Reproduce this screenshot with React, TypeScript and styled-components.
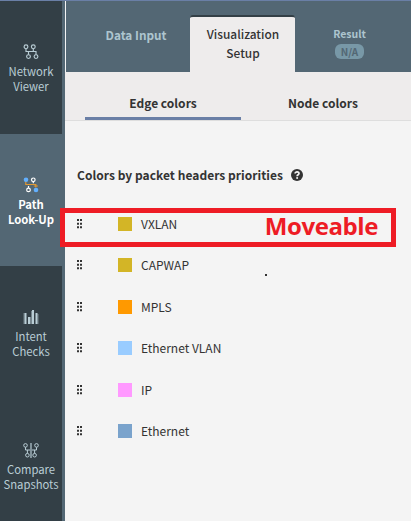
import React from "react";
import styled, { createGlobalStyle } from "styled-components";

const Global = createGlobalStyle`
  * { box-sizing: border-box; }
  body { margin: 0; overflow: hidden; font-family: "Noto Sans CJK SC", "Noto Sans", sans-serif; color: #333; }
`;

const Shell = styled.div`
  position: relative;
  display: flex;
  width: 411px;
  height: 521px;
  border-top: 1px solid #6a7fa6;
  background: #f4f4f4;
  overflow: hidden;
`;

const Sidebar = styled.nav`
  flex: 0 0 65px;
  height: 520px;
  padding-right: 3px;
  background: #536774;
`;

const NavItem = styled.a<{ $active?: boolean }>`
  display: flex;
  flex-direction: column;
  align-items: center;
  height: 132.6px;
  padding-top: 43px;
  background: ${(p) => (p.$active ? "#536774" : "#333f46")};
  color: ${(p) => (p.$active ? "#fff" : "#b9cdd5")};
  font-weight: ${(p) => (p.$active ? 700 : 400)};
  font-size: 11.3px;
  letter-spacing: ${(p) => (p.$active ? "-0.05px" : "-0.03px")};
  line-height: 15px;
  text-align: center;
  white-space: pre;
  svg { display: block; flex: none; margin-bottom: 4px; }
`;

const Main = styled.main`
  flex: 1;
  min-width: 0;
`;

const Tabs = styled.header`
  display: grid;
  grid-template-columns: 124px 105px 1fr;
  height: 71px;
  margin-left: 1px;
  background: #536774;
`;

const Tab = styled.div`
  display: flex;
  flex-direction: column;
  align-items: center;
  padding: 24px 0 0 16px;
  color: #adc5cf;
  font-size: 11.8px;
  font-weight: 700;
  line-height: 20px;
`;

const ActiveTab = styled(Tab)`
  margin-top: 14px;
  padding: 7px 0 0 1px;
  border-top: 2px solid #333f46;
  border-radius: 3px 3px 0 0;
  background: #eeecec;
  color: #333;
  font-size: 11.9px;
  font-weight: 500;
  line-height: 19px;
`;

const ResultTab = styled(Tab)`
  padding: 24px 7px 0 0;
  font-size: 10.5px;
  line-height: 18px;
`;

const Badge = styled.span`
  width: 29px;
  height: 15px;
  margin-top: 1px;
  border-radius: 6px;
  background: #7898a7;
  color: #536774;
  font-size: 10px;
  line-height: 15px;
  text-align: center;
`;

const SubTabs = styled.div`
  display: grid;
  grid-template-columns: 156px 1fr;
  height: 49px;
  padding: 0 6px 0 20px;
  border-bottom: 1px solid #dedede;
  background: #eeecec;
`;

const SubTab = styled.div<{ $active?: boolean }>`
  padding-top: 21px;
  border-bottom: ${(p) => (p.$active ? "3px solid #6a7fa6" : "0")};
  border-top-left-radius: 2px;
  font-size: 12px;
  font-weight: 700;
  line-height: 20px;
  text-align: center;
`;

const Title = styled.h2`
  display: flex;
  align-items: center;
  gap: 8px;
  height: 20px;
  margin: 44px 0 22px 12px;
  font-size: 12px;
  letter-spacing: 0.03px;
  font-weight: 700;
  line-height: 20px;
  white-space: nowrap;
`;

const Row = styled.li`
  display: flex;
  align-items: center;
  height: 41.5px;
  padding-left: 12px;
  font-size: 12px;
  line-height: 20px;
`;

const List = styled.ul`
  margin: -4px 0 0;
  padding: 0;
  list-style: none;
`;

const Handle = styled.svg`
  width: 6px;
  height: 10px;
  margin-right: 35px;
  fill: #333;
`;

const Swatch = styled.span<{ $color: string }>`
  width: 14px;
  height: 14px;
  margin-right: 9px;
  background: ${(p) => p.$color};
`;

const Highlight = styled.div`
  position: absolute;
  left: 60px;
  top: 207px;
  width: 336px;
  height: 39px;
  padding-right: 13px;
  border: 5px solid #ee1c25;
  color: #ee1c25;
  font: 700 24px/26px "Open Sans", sans-serif;
  letter-spacing: -0.4px;
  text-align: right;
`;

const Speck = styled.i`
  position: absolute;
  left: 265px;
  top: 273px;
  width: 2px;
  height: 2px;
  background: #333;
`;

const NetworkIcon = () => (
  <svg width="16" height="16" viewBox="0 0 16 16" fill="none" stroke="#b9cdd5" strokeWidth="1.15">
    <circle cx="3" cy="2.8" r="1.9" /><circle cx="10.3" cy="2.8" r="1.9" />
    <circle cx="5.5" cy="12.6" r="1.9" /><circle cx="13" cy="12.6" r="1.9" />
    <path d="M3 4.7v2.8h10v3.2M10.3 4.7v2.8M5.5 7.5v3.2" />
  </svg>
);

const PathIcon = () => (
  <svg width="16" height="16" viewBox="0 0 16 16" fill="none" strokeWidth="1.2">
    <path d="M2.8 4v3.5h10v3M10.8 9h4" stroke="#e09a35" />
    <path d="M10.3 4.8v1.4M5.5 9v2" stroke="#fff" />
    <circle cx="3" cy="2.8" r="2.3" fill="#62b0ff" /><circle cx="13" cy="13" r="2.3" fill="#62b0ff" />
    <circle cx="10.3" cy="2.8" r="1.8" stroke="#fff" /><circle cx="5.5" cy="12.9" r="1.8" stroke="#fff" />
  </svg>
);

const BarsIcon = () => (
  <svg width="16" height="16" viewBox="0 0 16 16" fill="#b9cdd5">
    <path d="M1.5 4h2v11h-2zM5 8h2v7H5zM9 1h2v14H9zM12.5 4h2v11h-2z" />
    <path d="M.5 4h1v11h-1zM7 8h1v7H7zM8 2h1v13H8zM14.5 5h1v10h-1z" opacity=".5" />
  </svg>
);

const CompareIcon = () => (
  <svg width="16" height="16" viewBox="0 0 16 16" fill="none" stroke="#b9cdd5">
    <path d="M8 1v15" strokeWidth="1.2" />
    <circle cx="2.5" cy="3.4" r="1.8" /><circle cx="13.5" cy="3.4" r="1.8" />
    <circle cx="4.4" cy="13.2" r="1.8" /><circle cx="11.6" cy="13.2" r="1.8" />
    <path d="M2.5 5.2V8H7M4.4 8v3.4M13.5 5.2V8H9M11.6 8v3.4" />
  </svg>
);

const HelpIcon = () => (
  <svg width="12" height="12" viewBox="0 0 12 12">
    <circle cx="6" cy="6" r="6" fill="#333" />
    <path d="M4.1 4.6C4.1 2.3 8 2.4 8 4.6 8 5.8 6.1 5.8 6.1 7.2" fill="none" stroke="#f4f4f4" strokeWidth="1.7" />
    <circle cx="6.1" cy="9" r="1" fill="#f4f4f4" />
  </svg>
);

const headers = [
  ["VXLAN", "#d3b526"],
  ["CAPWAP", "#d3b526"],
  ["MPLS", "#ff9900"],
  ["Ethernet VLAN", "#99ccff"],
  ["IP", "#ff99ff"],
  ["Ethernet", "#7aa3cc"],
];

export default function App() {
  return (
    <Shell>
      <Global />
      <Sidebar>
        <NavItem><NetworkIcon />{"Network\nViewer"}</NavItem>
        <NavItem $active><PathIcon />{"Path\nLook-Up"}</NavItem>
        <NavItem><BarsIcon />{"Intent\nChecks"}</NavItem>
        <NavItem><CompareIcon />{"Compare\nSnapshots"}</NavItem>
      </Sidebar>
      <Main>
        <Tabs>
          <Tab>Data Input</Tab>
          <ActiveTab><span>Visualization</span><span>Setup</span></ActiveTab>
          <ResultTab>Result<Badge>N/A</Badge></ResultTab>
        </Tabs>
        <SubTabs>
          <SubTab $active>Edge colors</SubTab>
          <SubTab>Node colors</SubTab>
        </SubTabs>
        <Title>Colors by packet headers priorities <HelpIcon /></Title>
        <List>
          {headers.map(([label, color]) => (
            <Row key={label}>
              <Handle viewBox="0 0 6 10">
                <path d="M0 0h2v2H0zM3 0h2v2H3zM0 3.7h2v2H0zM3 3.7h2v2H3zM0 7.2h2v2H0zM3 7.2h2v2H3z" />
              </Handle>
              <Swatch $color={color} />
              {label}
            </Row>
          ))}
        </List>
      </Main>
      <Highlight>Moveable</Highlight>
      <Speck />
    </Shell>
  );
}
